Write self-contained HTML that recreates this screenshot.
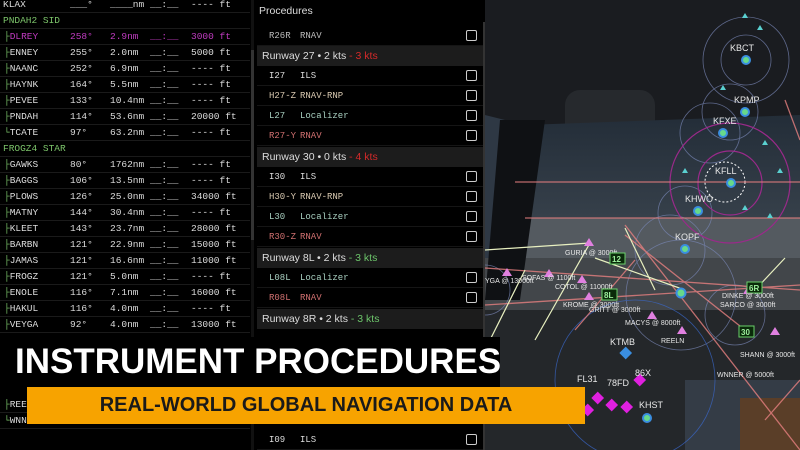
<!DOCTYPE html>
<html><head><meta charset="utf-8"><style>
*{margin:0;padding:0;box-sizing:border-box}
body{width:800px;height:450px;overflow:hidden;background:#000;position:relative;font-family:"Liberation Sans",sans-serif}
.mono{font-family:"Liberation Mono",monospace}
#left{position:absolute;left:0;top:0;width:255px;height:450px;background:#000}
.r{position:absolute;left:0;width:250px;height:16px;font-size:9.5px;color:#ddd;border-bottom:1px solid #1a1a1a;line-height:15px;white-space:pre}
.r span{position:absolute;top:0}
.g{color:#7cc46a}
.m{color:#c03bc0}
#mid{position:absolute;left:255px;top:0;width:230px;height:450px;background:#000}
.pr{position:absolute;left:2px;width:226px;height:20px;font-size:9px;line-height:20px;border-bottom:1px solid #151515}
.pr .a{position:absolute;left:12px}
.pr .b{position:absolute;left:43px}
.pr .c{position:absolute;right:6px;top:4px;width:11px;height:11px;border:1.5px solid #ccc;border-radius:2px}
.hd{position:absolute;left:2px;width:226px;height:20px;background:#1c1c1c;color:#ddd;font-size:10.5px;line-height:20px;padding-left:5px}
.red{color:#d42a2a}.grn{color:#6cc46a}
#map{position:absolute;left:485px;top:0;width:315px;height:450px;overflow:hidden;background:#1a1c20}
b.t{font-weight:normal;color:#7cc46a}
</style></head><body>
<div id="left" class="mono">
<div style="position:absolute;left:251px;top:0;width:3px;height:450px;background:#111"></div>
<div style="position:absolute;left:251px;top:50px;width:3px;height:190px;background:#333"></div>
<div class="r" style="top:-3px"><span style="left:3px">KLAX</span><span style="left:70px">___°</span><span style="left:110px">____nm</span><span style="left:150px">__:__</span><span style="left:191px">---- ft</span></div>
<div class="r g" style="top:13px"><span style="left:3px">PNDAH2 SID</span></div>
<div class="r m" style="top:29px"><span style="left:4px"><b class="t">├</b>DLREY</span><span style="left:70px">258°</span><span style="left:110px">2.9nm</span><span style="left:150px">__:__</span><span style="left:191px">3000 ft</span></div>
<div class="r" style="top:45px"><span style="left:4px"><b class="t">├</b>ENNEY</span><span style="left:70px">255°</span><span style="left:110px">2.0nm</span><span style="left:150px">__:__</span><span style="left:191px">5000 ft</span></div>
<div class="r" style="top:61px"><span style="left:4px"><b class="t">├</b>NAANC</span><span style="left:70px">252°</span><span style="left:110px">6.9nm</span><span style="left:150px">__:__</span><span style="left:191px">---- ft</span></div>
<div class="r" style="top:77px"><span style="left:4px"><b class="t">├</b>HAYNK</span><span style="left:70px">164°</span><span style="left:110px">5.5nm</span><span style="left:150px">__:__</span><span style="left:191px">---- ft</span></div>
<div class="r" style="top:93px"><span style="left:4px"><b class="t">├</b>PEVEE</span><span style="left:70px">133°</span><span style="left:110px">10.4nm</span><span style="left:150px">__:__</span><span style="left:191px">---- ft</span></div>
<div class="r" style="top:109px"><span style="left:4px"><b class="t">├</b>PNDAH</span><span style="left:70px">114°</span><span style="left:110px">53.6nm</span><span style="left:150px">__:__</span><span style="left:191px">20000 ft</span></div>
<div class="r" style="top:125px"><span style="left:4px"><b class="t">└</b>TCATE</span><span style="left:70px">97°</span><span style="left:110px">63.2nm</span><span style="left:150px">__:__</span><span style="left:191px">---- ft</span></div>
<div class="r g" style="top:141px"><span style="left:3px">FROGZ4 STAR</span></div>
<div class="r" style="top:157px"><span style="left:4px"><b class="t">├</b>GAWKS</span><span style="left:70px">80°</span><span style="left:110px">1762nm</span><span style="left:150px">__:__</span><span style="left:191px">---- ft</span></div>
<div class="r" style="top:173px"><span style="left:4px"><b class="t">├</b>BAGGS</span><span style="left:70px">106°</span><span style="left:110px">13.5nm</span><span style="left:150px">__:__</span><span style="left:191px">---- ft</span></div>
<div class="r" style="top:189px"><span style="left:4px"><b class="t">├</b>PLOWS</span><span style="left:70px">126°</span><span style="left:110px">25.0nm</span><span style="left:150px">__:__</span><span style="left:191px">34000 ft</span></div>
<div class="r" style="top:205px"><span style="left:4px"><b class="t">├</b>MATNY</span><span style="left:70px">144°</span><span style="left:110px">30.4nm</span><span style="left:150px">__:__</span><span style="left:191px">---- ft</span></div>
<div class="r" style="top:221px"><span style="left:4px"><b class="t">├</b>KLEET</span><span style="left:70px">143°</span><span style="left:110px">23.7nm</span><span style="left:150px">__:__</span><span style="left:191px">28000 ft</span></div>
<div class="r" style="top:237px"><span style="left:4px"><b class="t">├</b>BARBN</span><span style="left:70px">121°</span><span style="left:110px">22.9nm</span><span style="left:150px">__:__</span><span style="left:191px">15000 ft</span></div>
<div class="r" style="top:253px"><span style="left:4px"><b class="t">├</b>JAMAS</span><span style="left:70px">121°</span><span style="left:110px">16.6nm</span><span style="left:150px">__:__</span><span style="left:191px">11000 ft</span></div>
<div class="r" style="top:269px"><span style="left:4px"><b class="t">├</b>FROGZ</span><span style="left:70px">121°</span><span style="left:110px">5.0nm</span><span style="left:150px">__:__</span><span style="left:191px">---- ft</span></div>
<div class="r" style="top:285px"><span style="left:4px"><b class="t">├</b>ENOLE</span><span style="left:70px">116°</span><span style="left:110px">7.1nm</span><span style="left:150px">__:__</span><span style="left:191px">16000 ft</span></div>
<div class="r" style="top:301px"><span style="left:4px"><b class="t">├</b>HAKUL</span><span style="left:70px">116°</span><span style="left:110px">4.0nm</span><span style="left:150px">__:__</span><span style="left:191px">---- ft</span></div>
<div class="r" style="top:317px"><span style="left:4px"><b class="t">├</b>VEYGA</span><span style="left:70px">92°</span><span style="left:110px">4.0nm</span><span style="left:150px">__:__</span><span style="left:191px">13000 ft</span></div>
<div class="r" style="top:397px"><span style="left:4px"><b class="t">├</b>REE</span></div>
<div class="r" style="top:413px"><span style="left:4px"><b class="t">└</b>WNN</span><span style="left:150px">__:__</span></div>
</div>

<div id="mid">
<div style="position:absolute;left:4px;top:5px;color:#ddd;font-size:10.5px">Procedures</div>
<div style="position:absolute;left:228px;top:22px;width:2px;height:428px;background:#333"></div>
<div class="pr mono" style="top:26px"><span class="a" style="color:#bbb">R26R</span><span class="b" style="color:#bbb">RNAV</span><i class="c"></i></div>
<div class="hd" style="top:46px">Runway 27 • 2 kts <span class="red">- 3 kts</span></div>
<div class="pr mono" style="top:66px;color:#ddd"><span class="a">I27</span><span class="b">ILS</span><i class="c"></i></div>
<div class="pr mono" style="top:86px;color:#d8c8b0"><span class="a">H27-Z</span><span class="b">RNAV-RNP</span><i class="c"></i></div>
<div class="pr mono" style="top:106px;color:#a8cfc0"><span class="a">L27</span><span class="b">Localizer</span><i class="c"></i></div>
<div class="pr mono" style="top:126px;color:#d07070"><span class="a">R27-Y</span><span class="b">RNAV</span><i class="c"></i></div>
<div class="hd" style="top:147px">Runway 30 • 0 kts <span class="red">- 4 kts</span></div>
<div class="pr mono" style="top:167px;color:#ddd"><span class="a">I30</span><span class="b">ILS</span><i class="c"></i></div>
<div class="pr mono" style="top:187px;color:#d8c8b0"><span class="a">H30-Y</span><span class="b">RNAV-RNP</span><i class="c"></i></div>
<div class="pr mono" style="top:207px;color:#a8cfc0"><span class="a">L30</span><span class="b">Localizer</span><i class="c"></i></div>
<div class="pr mono" style="top:227px;color:#d07070"><span class="a">R30-Z</span><span class="b">RNAV</span><i class="c"></i></div>
<div class="hd" style="top:248px">Runway 8L • 2 kts <span class="grn">- 3 kts</span></div>
<div class="pr mono" style="top:268px;color:#a8cfc0"><span class="a">L08L</span><span class="b">Localizer</span><i class="c"></i></div>
<div class="pr mono" style="top:288px;color:#d07070"><span class="a">R08L</span><span class="b">RNAV</span><i class="c"></i></div>
<div class="hd" style="top:309px">Runway 8R • 2 kts <span class="grn">- 3 kts</span></div>
<div class="pr mono" style="top:430px;color:#ddd"><span class="a">I09</span><span class="b">ILS</span><i class="c"></i></div>
</div>

<div id="map">
<svg width="315" height="450" viewBox="0 0 315 450">
<defs><linearGradient id="sky" x1="0" y1="0" x2="0" y2="1"><stop offset="0" stop-color="#232d38"/><stop offset="1" stop-color="#3c4650"/></linearGradient></defs>
<rect width="315" height="450" fill="#1a1c20"/>
<rect x="80" y="90" width="90" height="50" rx="15" fill="#26292d"/>
<polygon points="40,125 315,115 315,240 40,250" fill="url(#sky)"/>
<polygon points="0,115 40,125 40,300 0,300" fill="#2e3844"/>
<rect x="40" y="218" width="275" height="45" fill="#545a60"/>
<rect x="0" y="258" width="315" height="55" fill="#42464a"/>
<rect x="0" y="310" width="315" height="140" fill="#24272a"/>
<polygon points="15,120 60,120 35,300 0,300" fill="#0f1114"/>
<rect x="200" y="380" width="115" height="70" fill="#343c46"/>
<rect x="255" y="398" width="60" height="52" fill="#5a3e28"/>
<g fill="none" stroke="#7a88b8" stroke-width="0.8" opacity="0.7">
<circle cx="261" cy="60" r="43"/><circle cx="261" cy="60" r="25"/>
<circle cx="245" cy="112" r="28"/><circle cx="225" cy="133" r="30"/>
<circle cx="200" cy="213" r="27"/><circle cx="185" cy="250" r="35"/>
<circle cx="196" cy="295" r="55"/><circle cx="250" cy="315" r="30"/>
<circle cx="150" cy="380" r="80" stroke="#3a6ad0"/><circle cx="0" cy="290" r="25"/>
</g>
<g fill="none" stroke="#9a2a8a" stroke-width="1.2"><circle cx="245" cy="183" r="60"/><circle cx="245" cy="183" r="32"/></g>
<circle cx="240" cy="182" r="20" fill="none" stroke="#fff" stroke-dasharray="2 2"/>
<g stroke="#e88080" stroke-width="1.3" opacity="0.8">
<line x1="30" y1="182" x2="315" y2="182"/><line x1="40" y1="218" x2="315" y2="218"/>
<line x1="0" y1="268" x2="315" y2="290"/><line x1="0" y1="305" x2="315" y2="285"/>
<line x1="140" y1="235" x2="260" y2="330"/><line x1="140" y1="225" x2="315" y2="450"/>
<line x1="300" y1="100" x2="315" y2="140"/><line x1="280" y1="420" x2="315" y2="380"/>
<line x1="90" y1="330" x2="150" y2="260"/>
</g>
<g stroke="#e8f0c0" stroke-width="1.2">
<line x1="0" y1="250" x2="105" y2="243"/><line x1="105" y1="243" x2="50" y2="340"/>
<line x1="140" y1="228" x2="170" y2="290"/><line x1="110" y1="258" x2="200" y2="290"/>
<line x1="300" y1="258" x2="270" y2="290"/><line x1="0" y1="350" x2="40" y2="270"/>
</g>
<g fill="#67d98a" stroke="#3a8ee0" stroke-width="2">
<circle cx="261" cy="60" r="4"/><circle cx="260" cy="112" r="4"/><circle cx="238" cy="133" r="4"/>
<circle cx="246" cy="183" r="4"/><circle cx="213" cy="211" r="4"/><circle cx="200" cy="249" r="4"/>
<circle cx="196" cy="293" r="4.5"/><circle cx="162" cy="418" r="4"/>
</g>
<rect x="136" y="348" width="9" height="9" fill="#3a8ee0" transform="rotate(45 140 353)"/>
<g fill="#e020e0"><rect x="150" y="375" width="9" height="9" transform="rotate(45 154 380)"/>
<rect x="108" y="393" width="9" height="9" transform="rotate(45 112 398)"/>
<rect x="122" y="400" width="9" height="9" transform="rotate(45 126 405)"/>
<rect x="137" y="402" width="9" height="9" transform="rotate(45 141 407)"/>
<rect x="98" y="405" width="9" height="9" transform="rotate(45 102 410)"/></g>
<g fill="#e080e0"><polygon points="104,238 109,246 99,246"/><polygon points="22,268 27,276 17,276"/><polygon points="64,269 69,277 59,277"/><polygon points="97,275 102,283 92,283"/><polygon points="104,292 109,300 99,300"/><polygon points="167,311 172,319 162,319"/><polygon points="197,326 202,334 192,334"/><polygon points="263,286 268,294 258,294"/><polygon points="290,327 295,335 285,335"/></g>
<g fill="#5ad0d0"><polygon points="260,13 263,18 257,18"/><polygon points="275,25 278,30 272,30"/><polygon points="200,168 203,173 197,173"/><polygon points="280,140 283,145 277,145"/><polygon points="295,168 298,173 292,173"/><polygon points="285,213 288,218 282,218"/><polygon points="238,85 241,90 235,90"/><polygon points="260,205 263,210 257,210"/></g>
<g font-family="Liberation Sans,sans-serif" font-size="9" fill="#e8e8e8">
<text x="245" y="51">KBCT</text><text x="249" y="103">KPMP</text><text x="228" y="124">KFXE</text>
<text x="230" y="174">KFLL</text><text x="200" y="202">KHWO</text><text x="190" y="240">KOPF</text>
<text x="125" y="345">KTMB</text><text x="150" y="376">86X</text><text x="92" y="382">FL31</text><text x="122" y="386">78FD</text><text x="154" y="408">KHST</text>
<g font-size="7"><text x="80" y="255">GURIA @ 3000ft</text><text x="37" y="280">SOFAS @ 1100ft</text><text x="70" y="289">COTOL @ 11000ft</text><text x="0" y="283">YGA @ 13000ft</text><text x="78" y="307">KROME @ 3000ft</text><text x="104" y="312">GRITT @ 3000ft</text><text x="140" y="325">MACYS @ 8000ft</text><text x="237" y="298">DINKE @ 3000ft</text><text x="235" y="307">SARCO @ 3000ft</text><text x="255" y="357">SHANN @ 3000ft</text><text x="232" y="377">WNNER @ 5000ft</text><text x="176" y="343">REELN</text></g>
</g>
<g font-family="Liberation Sans,sans-serif" font-size="8" font-weight="bold" fill="#9ef09e">
<rect x="125" y="253" width="15" height="11" fill="#0a2a0a" stroke="#6ad06a"/><text x="127" y="262">12</text>
<rect x="117" y="289" width="15" height="11" fill="#0a2a0a" stroke="#6ad06a"/><text x="119" y="298">8L</text>
<rect x="254" y="326" width="15" height="11" fill="#0a2a0a" stroke="#6ad06a"/><text x="256" y="335">30</text>
<rect x="262" y="282" width="15" height="11" fill="#0a2a0a" stroke="#6ad06a"/><text x="264" y="291">6R</text>
</g>
</svg>
</div>

<div style="position:absolute;left:0;top:337px;width:500px;height:51px;background:#000"></div>
<div style="position:absolute;left:15px;top:338px;color:#fff;font-size:35px;font-weight:bold;line-height:48px;white-space:nowrap">INSTRUMENT PROCEDURES</div>
<div style="position:absolute;left:27px;top:387px;width:558px;height:37px;background:#f7a300;color:#1a1a1a;font-size:20px;font-weight:bold;text-align:center;line-height:37px;white-space:nowrap">REAL-WORLD GLOBAL NAVIGATION DATA</div>
</body></html>
